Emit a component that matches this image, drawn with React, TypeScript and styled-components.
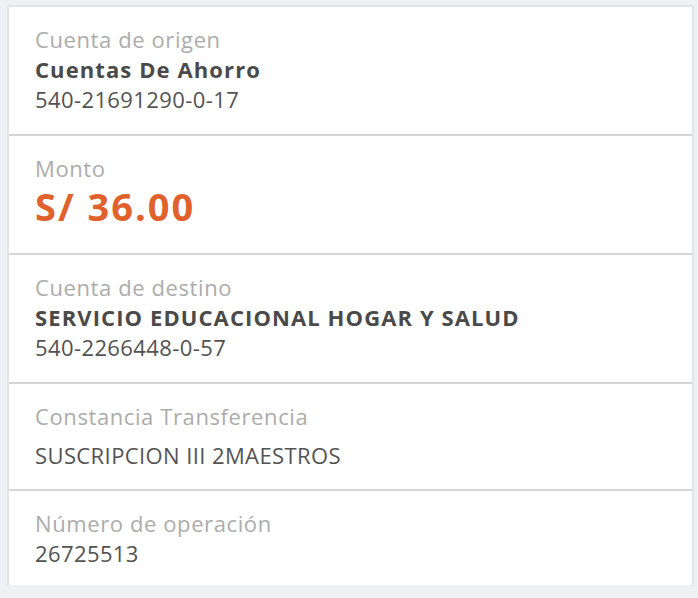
import styled, { createGlobalStyle } from 'styled-components';

const GlobalStyle = createGlobalStyle`
    html, body {
        margin: 0;
        padding: 0;
        background: #eff0f4;
    }
    body {
        font-family: 'Open Sans', 'Noto Sans', sans-serif;
    }
`;

type Detail = {
    label: string;
    value: string;
    kind: 'title' | 'amount' | 'plain';
    sub?: string;
};

const details: Detail[] = [
    { label: 'Cuenta de origen', value: 'Cuentas De Ahorro', kind: 'title', sub: '540-21691290-0-17' },
    { label: 'Monto', value: 'S/ 36.00', kind: 'amount' },
    {
        label: 'Cuenta de destino',
        value: 'SERVICIO EDUCACIONAL HOGAR Y SALUD',
        kind: 'title',
        sub: '540-2266448-0-57',
    },
    { label: 'Constancia Transferencia', value: 'SUSCRIPCION III 2MAESTROS', kind: 'plain' },
    { label: 'Número de operación', value: '26725513', kind: 'plain' },
];

const App = () => {
    return (
        <>
            <GlobalStyle />
            <Page>
                <Card>
                    {details.map((d, i) => (
                        <Row
                            key={d.label}
                            $last={i === details.length - 1}
                            $bottom={d.kind === 'amount' ? 23 : i === details.length - 1 ? 17 : d.kind === 'plain' ? 19 : 20}
                        >
                            <Label>{d.label}</Label>
                            {d.kind === 'amount' && <Amount>{d.value}</Amount>}
                            {d.kind === 'title' && <Title>{d.value}</Title>}
                            {d.kind === 'plain' && (
                                <Plain $gap={i === details.length - 1 ? 0 : 9}>{d.value}</Plain>
                            )}
                            {d.sub && <Plain $gap={0}>{d.sub}</Plain>}
                        </Row>
                    ))}
                </Card>
            </Page>
        </>
    );
};

const Page = styled.div`
    padding: 5px 4px 11px 7px;
`;

const Card = styled.div`
    display: flex;
    flex-direction: column;
    background: #ffffff;
    border: 2px solid #e3e4e8;
    border-bottom: none;
`;

const Row = styled.div<{ $last: boolean; $bottom: number }>`
    padding: 17px 26px ${(p) => p.$bottom}px 26px;
    border-bottom: ${(p) => (p.$last ? 'none' : '2px solid #d5d5d7')};
`;

const Label = styled.div`
    font-size: 22px;
    line-height: 30px;
    letter-spacing: 0.6px;
    color: #acacac;
`;

const Title = styled.div`
    font-size: 22px;
    line-height: 30px;
    font-weight: 700;
    letter-spacing: 1.1px;
    color: #4a4a4a;
`;

const Plain = styled.div<{ $gap: number }>`
    margin-top: ${(p) => p.$gap}px;
    font-size: 22px;
    line-height: 30px;
    letter-spacing: 0.4px;
    color: #535353;
`;

const Amount = styled.div`
    font-size: 38px;
    line-height: 47px;
    font-weight: 700;
    letter-spacing: 2px;
    color: #e0612b;
`;

export default App;
